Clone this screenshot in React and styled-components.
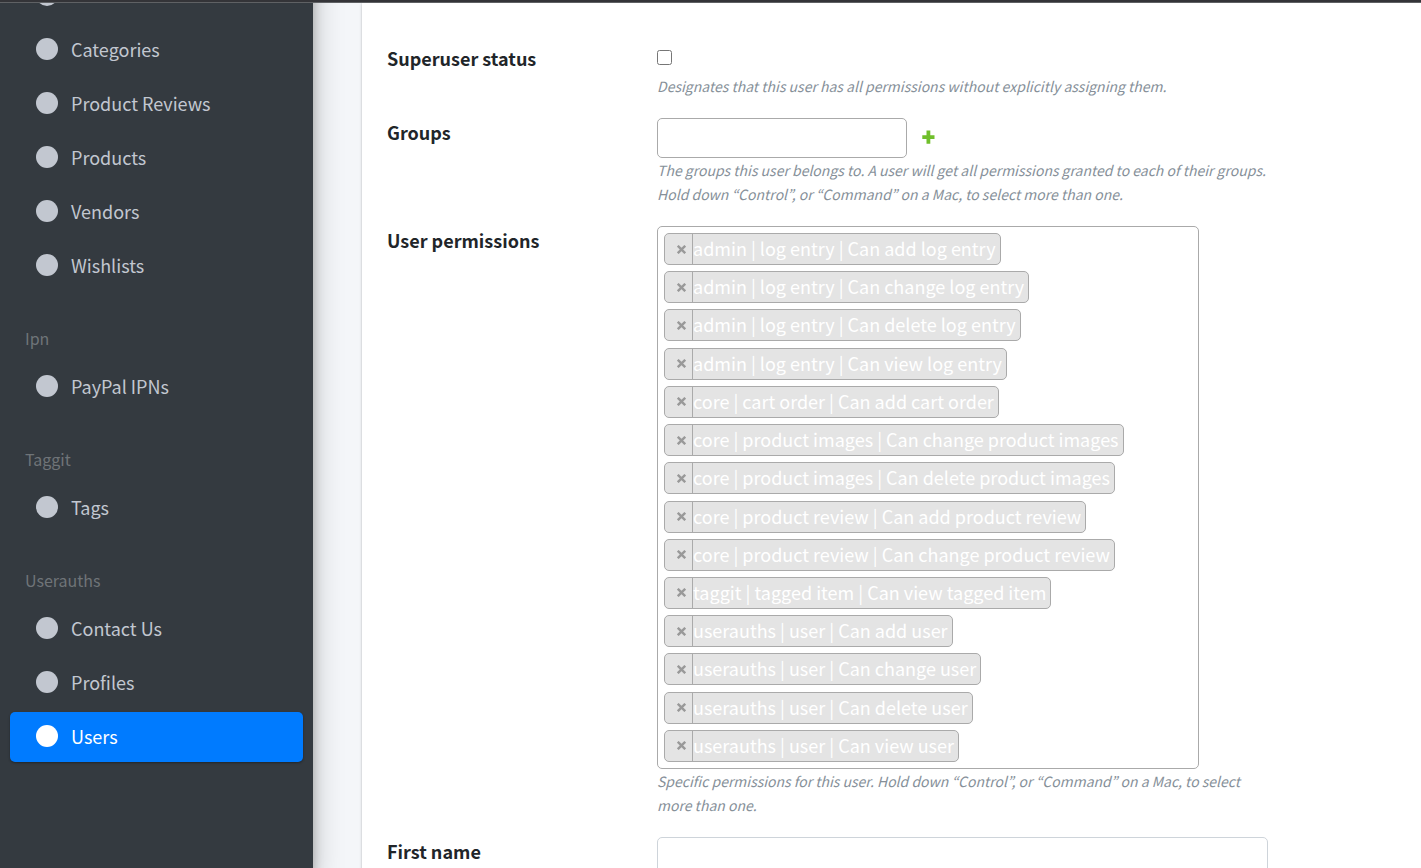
import React from "react";
import styled, { createGlobalStyle } from "styled-components";

const GlobalStyle = createGlobalStyle`
  *, *::before, *::after { box-sizing: border-box; }
  body {
    margin: 0;
    background: #f4f6f9;
    color: #212529;
    font-family: "Source Sans Pro", "Noto Sans CJK KR", "Noto Sans", sans-serif;
    font-size: 18px;
    line-height: 28px;
  }
`;

const Page = styled.div`
  display: flex;
  flex-direction: column;
  height: 100vh;
  overflow: hidden;
`;

const TopEdge = styled.header`
  flex: none;
  height: 3px;
  background: #343438;
  border-bottom: 1px solid #5f6164;
`;

const Body = styled.div`
  display: flex;
  flex: 1;
  min-height: 0;
  overflow: hidden;
`;

const Sidebar = styled.nav`
  z-index: 1;
  flex: none;
  width: 313px;
  margin-top: -60px;
  padding: 28px 10px 0;
  background: #343a40;
  box-shadow: 0 14px 28px rgba(0, 0, 0, 0.25), 0 10px 10px rgba(0, 0, 0, 0.22);
`;

const NavList = styled.ul`
  list-style: none;
  margin: 0;
  padding: 0;
`;

const NavHeader = styled.li`
  padding: 31px 15px 12px;
  color: #6f7478;
  font-size: 16px;
  line-height: 24px;
`;

const NavItem = styled.li`
  margin-bottom: 4px;
`;

const NavLink = styled.a`
  display: flex;
  align-items: center;
  gap: 13px;
  height: 50px;
  padding: 0 26px 2px;
  border-radius: 5px;
  text-decoration: none;
  color: ${(p) => (p.$active ? "#fff" : "#c2c7d0")};
  background: ${(p) => (p.$active ? "#007bff" : "transparent")};
  box-shadow: ${(p) =>
    p.$active ? "0 1px 3px rgba(0,0,0,.12), 0 1px 2px rgba(0,0,0,.24)" : "none"};
`;

const Dot = styled.span`
  width: 22px;
  height: 22px;
  border-radius: 50%;
  background: currentColor;
`;

const Content = styled.main`
  flex: 1;
  min-width: 0;
  padding-left: 49px;
`;

const Card = styled.form`
  display: flex;
  flex-direction: column;
  gap: 20px;
  min-height: 100%;
  padding: 41px 25px 0;
  background: #fff;
  box-shadow: 0 0 1px rgba(0, 0, 0, 0.125), 0 1px 3px rgba(0, 0, 0, 0.2);
`;

const Row = styled.div`
  display: grid;
  grid-template-columns: 270px minmax(0, 611px);
`;

const Label = styled.label`
  font-weight: 700;
`;

const CheckLine = styled.div`
  display: flex;
  align-items: center;
  height: 30px;
  padding-bottom: 4px;
`;

const Checkbox = styled.input`
  width: 15px;
  height: 15px;
  margin: 0;
`;

const GroupLine = styled.div`
  display: flex;
  align-items: center;
  gap: 15px;
`;

const GroupInput = styled.input`
  width: 250px;
  height: 40px;
  padding: 0 8px;
  border: 1px solid #aaa;
  border-radius: 5px;
  font: inherit;
`;

const AddButton = styled.button`
  display: flex;
  padding: 0 0 2px;
  border: 0;
  background: none;
`;

const Help = styled.p`
  margin: 0;
  color: #869099;
  font-size: 14px;
  font-style: italic;
  line-height: 24px;
`;

const TagBox = styled.ul`
  display: flex;
  flex-direction: column;
  align-items: flex-start;
  justify-content: space-between;
  width: 542px;
  max-width: 100%;
  min-height: 543px;
  margin: 0;
  padding: 6px;
  list-style: none;
  border: 1px solid #aaa;
  border-radius: 5px;
`;

const Tag = styled.li`
  display: flex;
  height: 32px;
  padding-right: 4px;
  border: 1px solid #aaa;
  border-radius: 5px;
  background: #e4e4e4;
  color: #fff;
  white-space: nowrap;
`;

const RemoveButton = styled.button`
  display: flex;
  align-items: center;
  justify-content: flex-end;
  width: 28px;
  padding: 0 6px 0 0;
  border: 0;
  border-right: 1px solid #aaa;
  background: none;
  color: #999;
`;

const TextInput = styled.input`
  width: 100%;
  height: 48px;
  padding: 0 15px;
  border: 1px solid #ced4da;
  border-radius: 5px;
  font: inherit;
`;

const NAV = [
  {
    items: ["Cart Order Items", "Categories", "Product Reviews", "Products", "Vendors", "Wishlists"],
  },
  { header: "Ipn", items: ["PayPal IPNs"] },
  { header: "Taggit", items: ["Tags"] },
  { header: "Userauths", items: ["Contact Us", "Profiles", "Users"] },
];

const PERMISSIONS = [
  "admin | log entry | Can add log entry",
  "admin | log entry | Can change log entry",
  "admin | log entry | Can delete log entry",
  "admin | log entry | Can view log entry",
  "core | cart order | Can add cart order",
  "core | product images | Can change product images",
  "core | product images | Can delete product images",
  "core | product review | Can add product review",
  "core | product review | Can change product review",
  "taggit | tagged item | Can view tagged item",
  "userauths | user | Can add user",
  "userauths | user | Can change user",
  "userauths | user | Can delete user",
  "userauths | user | Can view user",
];

export default function App() {
  return (
    <Page>
      <GlobalStyle />
      <TopEdge />
      <Body>
        <Sidebar>
          <NavList>
            {NAV.map((group) => (
              <React.Fragment key={group.items[0]}>
                {group.header && <NavHeader>{group.header}</NavHeader>}
                {group.items.map((name) => (
                  <NavItem key={name}>
                    <NavLink href="#" $active={name === "Users"}>
                      <Dot />
                      {name}
                    </NavLink>
                  </NavItem>
                ))}
              </React.Fragment>
            ))}
          </NavList>
        </Sidebar>
        <Content>
          <Card>
            <Row>
              <Label htmlFor="superuser">Superuser status</Label>
              <div>
                <CheckLine>
                  <Checkbox type="checkbox" id="superuser" />
                </CheckLine>
                <Help>
                  Designates that this user has all permissions without explicitly assigning them.
                </Help>
              </div>
            </Row>
            <Row>
              <Label htmlFor="groups">Groups</Label>
              <div>
                <GroupLine>
                  <GroupInput type="text" id="groups" />
                  <AddButton type="button" aria-label="Add group">
                    <svg width="13" height="14" viewBox="0 0 13 14" fill="#70bf2b">
                      <path d="M4.500 0.500h3.800v4.700H12.500v3.800H8.300v4.700H4.500V9H0.300V5.200h4.200z" />
                    </svg>
                  </AddButton>
                </GroupLine>
                <Help>
                  The groups this user belongs to. A user will get all permissions granted to each
                  of their groups. Hold down “Control”, or “Command” on a Mac, to select more than
                  one.
                </Help>
              </div>
            </Row>
            <Row>
              <Label as="span" id="permissions">User permissions</Label>
              <div>
                <TagBox aria-labelledby="permissions">
                  {PERMISSIONS.map((name) => (
                    <Tag key={name}>
                      <RemoveButton type="button" aria-label={`Remove ${name}`}>
                        <svg width="9" height="9" viewBox="0 0 9 9" stroke="#999" strokeWidth="2.4">
                          <path d="M0.800 0.800L8.200 8.200M8.200 0.800L0.800 8.200" />
                        </svg>
                      </RemoveButton>
                      {name}
                    </Tag>
                  ))}
                </TagBox>
                <Help>
                  Specific permissions for this user. Hold down “Control”, or “Command” on a Mac, to
                  select more than one.
                </Help>
              </div>
            </Row>
            <Row>
              <Label htmlFor="first-name">First name</Label>
              <TextInput type="text" id="first-name" />
            </Row>
          </Card>
        </Content>
      </Body>
    </Page>
  );
}
